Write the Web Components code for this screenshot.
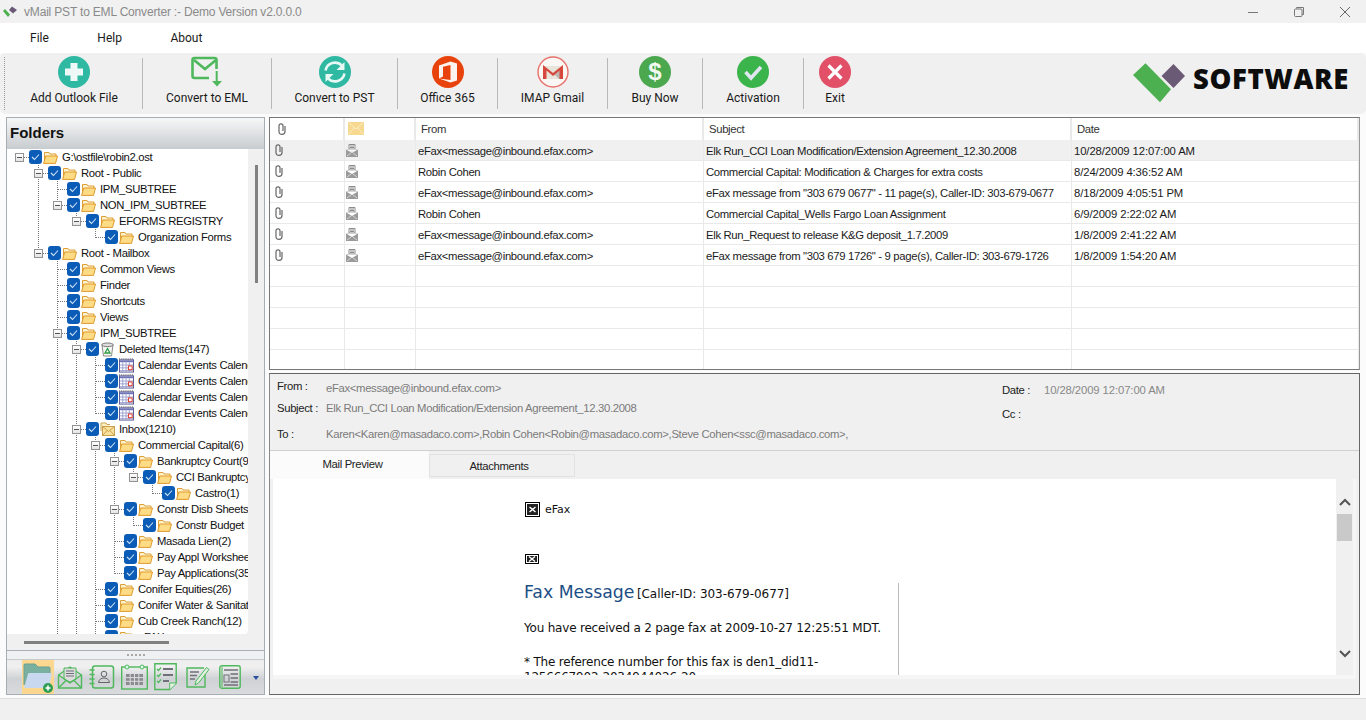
<!DOCTYPE html>
<html>
<head>
<meta charset="utf-8">
<title>vMail PST to EML Converter</title>
<style>
  html, body { margin: 0; height: 720px; overflow: hidden; background: #fbfbfb; }
  body { display: flex; flex-direction: column; font: 11.3px "Liberation Sans", Arial, sans-serif; }
</style>
</head>
<body>
<title-bar>vMail PST to EML Converter :- Demo Version v2.0.0.0</title-bar>
<menu-bar><menu-item>File</menu-item><menu-item>Help</menu-item><menu-item>About</menu-item></menu-bar>
<tool-bar>
  <tool-button icon="add" width="137">Add Outlook File</tool-button>
  <tool-button icon="eml" width="129">Convert to EML</tool-button>
  <tool-button icon="pst" width="126">Convert to PST</tool-button>
  <tool-button icon="office" width="100">Office 365</tool-button>
  <tool-button icon="gmail" width="110">IMAP Gmail</tool-button>
  <tool-button icon="buy" width="95">Buy Now</tool-button>
  <tool-button icon="active" width="101">Activation</tool-button>
  <tool-button icon="exit" width="62" last>Exit</tool-button>
</tool-bar>
<main-area>
  <folder-panel></folder-panel>
  <right-pane>
    <mail-list></mail-list>
    <mail-detail></mail-detail>
  </right-pane>
</main-area>
<status-bar></status-bar>

<script>
// icons used by the toolbar, lists and the folder tree
const ICONS = {
  add: `<svg viewBox="0 0 32 32" width="32" height="32"><circle cx="16" cy="16" r="16" fill="#2fb8a2"/><path d="M12.5 7h7v5.5H25v7h-5.5V25h-7v-5.5H7v-7h5.5z" fill="#eef8f6"/></svg>`,
  eml: `<svg viewBox="0 0 32 32" width="32" height="32"><path d="M18 22H3.5Q1.5 22 1.5 20V4Q1.5 2 3.5 2h20q2 0 2 2v9" fill="none" stroke="#4fb85c" stroke-width="2.6"/><path d="M3 4l11 9 11-9" fill="none" stroke="#4fb85c" stroke-width="2.6"/><path d="M25.7 15v11" stroke="#4fb85c" stroke-width="2"/><path d="M21 25h10l-5 5.5z" fill="#4fb85c"/></svg>`,
  pst: `<svg viewBox="0 0 32 32" width="32" height="32"><circle cx="16" cy="16" r="16" fill="#2fb8a2"/><path d="M6.5 14.5A9.8 9.8 0 0 1 23 9.5" fill="none" stroke="#e8f8f5" stroke-width="2.6"/><path d="M25.5 6v8h-8z" fill="#e8f8f5"/><path d="M25.5 17.5A9.8 9.8 0 0 1 9 22.5" fill="none" stroke="#e8f8f5" stroke-width="2.6"/><path d="M6.5 26v-8h8z" fill="#e8f8f5"/></svg>`,
  office: `<svg viewBox="0 0 32 32" width="32" height="32"><circle cx="16" cy="16" r="16" fill="#e8430c"/><path d="M7 9.5L18.500 5.5l6.5 2v17l-6.5 2L7 22.5l11.5 1.5V9L11 10.8v9.8L7 22.5z" fill="#fdf3ee"/></svg>`,
  gmail: `<svg viewBox="0 0 32 32" width="32" height="32"><circle cx="16" cy="16" r="15" fill="#fbf7f4" stroke="#e8716c" stroke-width="1.4"/><path d="M6 10h20v13H6z" fill="#e9e4da"/><path d="M16 17L26 10v13h-4z" fill="#bfb8b0"/><path d="M6 23V9l10 8 10-8v14h-3.5V14.5L16 20l-6.5-5.5V23z" fill="#d6483e"/></svg>`,
  buy: `<svg viewBox="0 0 32 32" width="32" height="32"><circle cx="16" cy="16" r="16" fill="#4ba84f"/><text x="16" y="24" text-anchor="middle" font-family="Liberation Sans" font-weight="700" font-size="24" fill="#f2faf2">$</text></svg>`,
  active: `<svg viewBox="0 0 32 32" width="32" height="32"><circle cx="16" cy="16" r="16" fill="#3bb44b"/><path d="M8.5 16l5.5 6 10-11" fill="none" stroke="#dfe6f2" stroke-width="3.6"/></svg>`,
  exit: `<svg viewBox="0 0 32 32" width="32" height="32"><circle cx="16" cy="16" r="16" fill="#e25068"/><path d="M9.5 9.5l13 13M22.5 9.5l-13 13" stroke="#fff" stroke-width="3.2"/></svg>`,
  folder: `<svg viewBox="0 0 15 13" width="15" height="13"><path d="M1.5 10.5V1.500h4.500l1 1.500h6v2" fill="#fdf2cc" stroke="#dd9f35"/><path d="M.6 12.400L2.800 5h11.700l-2 7.400z" fill="#fddc85" stroke="#e09a2c"/></svg>`,
  trash: `<svg viewBox="0 0 15 15" width="15" height="15"><path d="M2 3l1.5 11h8L13 3z" fill="#f5f5f3" stroke="#8a8a8a"/><ellipse cx="7.5" cy="2.8" rx="5.8" ry="1.8" fill="#dedede" stroke="#777"/><path d="M7.5 6.5l2.5 4.5H5z" fill="none" stroke="#2f9e44" stroke-width="1.3"/></svg>`,
  calendar: `<svg viewBox="0 0 16 15" width="16" height="15"><rect x=".5" y="1.500" width="15" height="13" fill="#fff" stroke="#55558f"/><path d="M0 .5h16" stroke="#444" stroke-dasharray="1 1"/><path d="M1 3h14" stroke="#6f73b8" stroke-width="2"/><path d="M1 7h14M1 10h14M1 13h14M4 4v10M7.500 4v10M11 4v10" stroke="#9a9ed0"/><rect x="10" y="8" width="4" height="4" fill="#fff" stroke="#e03020"/></svg>`,
  inbox: `<svg viewBox="0 0 15 15" width="15" height="15"><path d="M1 9V1h5l1 1.5h3" fill="#fbeec0" stroke="#c9a55a"/><rect x="2.5" y="4.5" width="12" height="9" fill="#fbe29a" stroke="#c9a050"/><path d="M2.5 4.5l6 5 6-5M2.5 13.500l4.500-5M14.500 13.500l-4.500-5" fill="none" stroke="#c9a050"/></svg>`,
  clip: `<svg viewBox="0 0 8 12" width="8" height="12"><path d="M7 3v5.500Q7 11.300 4 11.300T1 8.500V2.800Q1 .8 3 .8t2 2V8" fill="none" stroke="#666" stroke-width="1.2"/></svg>`,
  env: `<svg viewBox="0 0 16 13" width="16" height="13"><rect width="16" height="13" fill="#f6d88e"/><path d="M1 1l7 6 7-6M1 12l5-6M15 12l-5-6" fill="none" stroke="#fbeecb"/></svg>`,
  fax: `<svg viewBox="0 0 12 13" width="12" height="13"><path d="M3 .5h6V5H3z" fill="#fff" stroke="#8b8b8b"/><path d="M0 5.5l6 3.5 6-3.500V13H0z" fill="#9a9a9a"/><path d="M4 2h4M4 3.500h4" stroke="#8b8b8b"/><path d="M0 5.5h12M1 12l4-3M11 12l-4-3" stroke="#d5d5d5" fill="none"/></svg>`,
  nFolder: `<svg viewBox="0 0 32 32" width="32" height="32"><path d="M2 24V4q0-1 1-1h10l3 3h11q1 0 1 1v6" fill="#79b0a0" stroke="#6a9f90"/><path d="M2 27l4-14q.5-1 1.5-1H30l-3 15z" fill="#c8d8ee"/><circle cx="26" cy="27" r="5" fill="#2f9f55"/><path d="M26 24.500v5M23.500 27h5" stroke="#fff" stroke-width="1.6"/></svg>`,
  nMail: `<svg viewBox="0 0 26 26" width="26" height="26"><path d="M1.5 11L13 3l11.5 8v13h-23z" fill="none" stroke="#4fb85c" stroke-width="1.4"/><path d="M7 4h12v11l-6 3-6-3z" fill="#ddd" stroke="#4fb85c"/><path d="M9 7h8M9 9.500h8M9 12h8" stroke="#6c6c7a"/><path d="M1.5 11L13 19l11.500-8M1.500 24l8-8M24.500 24l-8-8" fill="none" stroke="#4fb85c" stroke-width="1.4"/></svg>`,
  nBook: `<svg viewBox="0 0 26 26" width="26" height="26"><rect x="3.5" y="2" width="21" height="22" rx="2.5" fill="none" stroke="#4fb85c" stroke-width="1.5"/><path d="M.5 6h5M.5 10.500h5M.5 15h5M.5 19.500h5" stroke="#4fb85c" stroke-width="1.6"/><circle cx="15" cy="10" r="2.8" fill="none" stroke="#666"/><path d="M9.5 18.500q1-4.500 5.500-4.500t5.500 4.500z" fill="none" stroke="#666"/></svg>`,
  nCal: `<svg viewBox="0 0 27 26" width="27" height="26"><rect x=".7" y="3" width="25.6" height="22" fill="none" stroke="#4fb85c" stroke-width="1.4"/><circle cx="6" cy="3" r="2" fill="#dfe" stroke="#4fb85c"/><circle cx="21" cy="3" r="2" fill="#dfe" stroke="#4fb85c"/><path d="M5 10h17v11H5z" fill="#8a8a90"/><path d="M5 13.600h17M5 17.300h17M9.200 10v11M13.500 10v11M17.800 10v11" stroke="#dedede"/></svg>`,
  nTask: `<svg viewBox="0 0 24 28" width="24" height="28"><path d="M.8.8h21.4V20l-6.5 6.5H.8z" fill="none" stroke="#4fb85c" stroke-width="1.4"/><path d="M15.700 26.500V20h6.500" fill="#e8f2e8" stroke="#4fb85c"/><path d="M3 6l1.5 1.5L7 4.500M3 12l1.500 1.500L7 10.500M3 18l1.500 1.500L7 16.500" fill="none" stroke="#4fb85c" stroke-width="1.2"/><path d="M9 6h10M9 12h10M9 18h6" stroke="#707078" stroke-width="1.8"/></svg>`,
  nNote: `<svg viewBox="0 0 24 24" width="24" height="24"><path d="M19 9v13H1V3h17" fill="none" stroke="#4fb85c" stroke-width="1.4"/><path d="M4 7h9M4 10.500h7M4 14h5" stroke="#707078" stroke-width="1.5"/><path d="M9 20l1-4L20.500 2.500l2.500 2L12.500 18z" fill="#dff0df" stroke="#4fb85c"/></svg>`,
  nJournal: `<svg viewBox="0 0 22 24" width="22" height="24"><rect x=".8" y=".8" width="20.4" height="22.4" rx="2" fill="none" stroke="#4fb85c" stroke-width="1.4"/><path d="M3 2v20" stroke="#4fb85c"/><path d="M5 5h14M11.500 9h7.500M11.500 13h7.500M11.500 17h7.500M5 20h14" stroke="#707078" stroke-width="1.3"/><rect x="5" y="10" width="5" height="7" fill="none" stroke="#707078"/></svg>`
};

class TitleBar extends HTMLElement {
  constructor() {
    super();
    this.attachShadow({ mode: 'open' }).innerHTML = `
      <style>
        :host { display: flex; align-items: center; height: 23px; flex: none; background: #f1f1f1; color: #8a8a8a; font: 12px "Liberation Sans", sans-serif; letter-spacing: -.18px; }
        .logo { margin: 0 7px 0 3px; display: flex; }
        .title { flex: 1; }
        .ctl { width: 46px; display: flex; justify-content: center; }
        .ctls { display: flex; margin-right: -2px; }
      </style>
      <span class="logo"><svg width="14" height="11" viewBox="0 0 14 11"><path d="M0 5l2-2 5 5.500L5 11z" fill="#4cb050"/><path d="M6 4l3-3.500L14 4l-4 3.500z" fill="#6b5a75"/></svg></span>
      <span class="title"><slot></slot></span>
      <span class="ctls">
        <span class="ctl"><svg width="12" height="12"><path d="M1 6.500h10" stroke="#777"/></svg></span>
        <span class="ctl"><svg width="12" height="12"><path d="M3.500 2.500V1.500h7v7h-1.500" fill="none" stroke="#777"/><rect x="1.500" y="3" width="7.500" height="7.500" rx="1" fill="none" stroke="#777"/></svg></span>
        <span class="ctl"><svg width="12" height="12"><path d="M1 1l10 10M11 1L1 11" stroke="#666"/></svg></span>
      </span>`;
  }
}

class MenuBar extends HTMLElement {
  constructor() {
    super();
    this.attachShadow({ mode: 'open' }).innerHTML = `
      <style>
        :host { display: flex; align-items: center; height: 30px; flex: none; background: #fff; padding-left: 30px; gap: 48.5px; color: #1a1a1a; }
      </style>
      <slot></slot>`;
  }
}

class MenuItem extends HTMLElement {
  constructor() {
    super();
    this.attachShadow({ mode: 'open' }).innerHTML = `
      <style>:host { display: block; font: 12px Roboto, sans-serif; }</style><slot></slot>`;
  }
}

class ToolBar extends HTMLElement {
  constructor() {
    super();
    this.attachShadow({ mode: 'open' }).innerHTML = `
      <style>
        :host { display: flex; align-items: stretch; height: 61px; flex: none; background: #f0f0f0; border-radius: 5px; }
        .grip { width: 1px; margin: 4px 0 4px 4px; border-left: 1px dotted #999; }
        .logo { margin-left: auto; margin-right: 17px; display: flex; align-items: center; gap: 7px; }
        .logo svg { margin-top: -2px; }
        .word { font: 800 27.5px "Open Sans", sans-serif; letter-spacing: .6px; color: #0d0d0d; margin-top: -10px; }
      </style>
      <span class="grip"></span>
      <slot></slot>
      <span class="logo">
        <svg width="53" height="40" viewBox="0 0 53 40"><path d="M0 12L12.500.3 38 26.300 27 39.300z" fill="#4cb050"/><path d="M28.500 13L40.500 1 52 13 40.500 25z" fill="#6b5a75"/></svg>
        <span class="word">SOFTWARE</span>
      </span>`;
  }
}

class ToolButton extends HTMLElement {
  constructor() {
    super();
    const w = this.getAttribute('width');
    const sep = this.hasAttribute('last') ? 'none' : '1px solid #b8b8b8';
    this.attachShadow({ mode: 'open' }).innerHTML = `
      <style>
        :host { display: flex; flex-direction: column; align-items: center; width: ${w}px; flex: none; font: 12px Roboto, sans-serif; color: #1a1a1a; }
        .ico { height: 32px; margin-top: -2px; display: flex; }
        .lab { margin-top: 2px; line-height: 17px; white-space: nowrap; }
        .box { display: flex; flex-direction: column; align-items: center; flex: 1; align-self: stretch; margin: 5px 0; border-right: ${sep}; }
      </style>
      <div class="box">
        <span class="ico">${ICONS[this.getAttribute('icon')]}</span>
        <span class="lab"><slot></slot></span>
      </div>`;
  }
}

class MainArea extends HTMLElement {
  constructor() {
    super();
    this.attachShadow({ mode: 'open' }).innerHTML = `
      <style>:host { display: flex; flex: 1; min-height: 0; padding: 3px 6px 3px 6px; gap: 4px; }</style><slot></slot>`;
  }
}

// rows of the folder tree: [level, label, icon]
const FOLDERS = [
  [0, 'G:\\ostfile\\robin2.ost'], [1, 'Root - Public'], [2, 'IPM_SUBTREE'], [2, 'NON_IPM_SUBTREE'],
  [3, 'EFORMS REGISTRY'], [4, 'Organization Forms'], [1, 'Root - Mailbox'], [2, 'Common Views'],
  [2, 'Finder'], [2, 'Shortcuts'], [2, 'Views'], [2, 'IPM_SUBTREE'], [3, 'Deleted Items(147)', 'trash'],
  [4, 'Calendar Events Calendar', 'calendar'], [4, 'Calendar Events Calendar', 'calendar'],
  [4, 'Calendar Events Calendar', 'calendar'], [4, 'Calendar Events Calendar', 'calendar'],
  [3, 'Inbox(1210)', 'inbox'], [4, 'Commercial Capital(6)'], [5, 'Bankruptcy Court(9)'], [6, 'CCI Bankruptcy'],
  [7, 'Castro(1)'], [5, 'Constr Disb Sheets'], [6, 'Constr Budget'], [5, 'Masada Lien(2)'],
  [5, 'Pay Appl Worksheets'], [5, 'Pay Applications(35)'], [4, 'Conifer Equities(26)'],
  [4, 'Conifer Water & Sanitation'], [4, 'Cub Creek Ranch(12)'], [4, 'eFAX']
];

class TreeRow extends HTMLElement {
  // cells: one flag per level, own cell last. kind is pipe, tee, end or blank
  setup(cells, hasKids, icon) {
    const html = cells.map((k, i) => {
      const own = i === cells.length - 1;
      return `<span class="cell ${k}">${own && hasKids ? '<i class="exp"></i>' : ''}</span>`;
    }).join('');
    this.attachShadow({ mode: 'open' }).innerHTML = `
      <style>
        :host { display: flex; align-items: stretch; height: 16px; white-space: nowrap; color: #111; }
        .cell { width: 19px; flex: none; display: flex; align-items: center; justify-content: center; background-repeat: no-repeat; }
        .pipe, .tee { background-image: repeating-linear-gradient(#777 0 1px, transparent 1px 2px); background-size: 1px 100%; background-position: 9px 0; }
        .end { background-image: repeating-linear-gradient(#777 0 1px, transparent 1px 2px); background-size: 1px 8px; background-position: 9px 0; }
        .tee, .end, .root { position: relative; }
        .tee::after, .end::after, .root::after { content: ""; position: absolute; left: 9px; right: 0; top: 8px; border-top: 1px dotted #777; }
        .exp { width: 9px; height: 9px; box-sizing: border-box; border: 1px solid #939393; background: linear-gradient(#fff, #e4e4e4); position: relative; z-index: 1; display: flex; align-items: center; justify-content: center; }
        .exp::before { content: ""; width: 5px; border-top: 1px solid #555; }
        .chk { width: 13px; height: 14px; margin-top: 1px; border-radius: 3px; background: #0b5cb6; flex: none; display: flex; align-items: center; justify-content: center; }
        .ico { display: flex; align-items: center; width: 15px; margin: 0 0 0 1px; flex: none; }
        .txt { margin-left: 4.5px; line-height: 16px; letter-spacing: -.33px; }
      </style>
      ${html}
      <span class="chk"><svg width="9" height="8" viewBox="0 0 9 8"><path d="M1 4l2.500 2.500L8 1.500" fill="none" stroke="#cfe2f7" stroke-width="1.1"/></svg></span>
      <span class="ico">${ICONS[icon || 'folder']}</span>
      <span class="txt"><slot></slot></span>`;
  }
}

class FolderPanel extends HTMLElement {
  constructor() {
    super();
    const bar = ['nMail', 'nBook', 'nCal', 'nTask', 'nNote', 'nJournal'];
    this.attachShadow({ mode: 'open' }).innerHTML = `
      <style>
        :host { display: flex; flex-direction: column; width: 259px; box-sizing: border-box; flex: none; border: 1px solid #a6adb3; background: #f0f0f0; }
        .head { height: 31px; flex: none; padding: 0 0 2px 3px; box-sizing: border-box; background: linear-gradient(#f7f7f7, #c7ccd0); font: 700 15px "Liberation Sans", sans-serif; color: #111; display: flex; align-items: center; }
        .body { height: 485px; flex: none; display: flex; }
        .tree { width: 241px; flex: none; background: #fff; overflow: hidden; border-radius: 0 0 4px 0; padding-left: 2.5px; box-sizing: border-box; }
        .vs { flex: 1; display: flex; justify-content: center; padding-top: 16px; }
        .vs i { width: 3px; height: 118px; background: #808080; margin-left: 1px; }
        .hs { height: 16px; flex: none; display: flex; align-items: center; padding-left: 17px; border-bottom: 1px solid #a6adb3; }
        .hs i { width: 145px; height: 3px; background: #808080; }
        .split { height: 8px; flex: none; display: flex; justify-content: center; align-items: center; gap: 2px; background: #eef0f2; border-bottom: 1px solid #c6cacd; }
        .split i { width: 2px; height: 2px; background: #a8a8a8; }
        .bar { flex: 1; display: flex; align-items: center; padding-left: 15px; background: linear-gradient(#ededed, #f0f0f0 20%, #cfd2d5 55%, #d9dbdd); }
        .sel { width: 32px; align-self: stretch; background: #fbd78f; display: flex; align-items: center; justify-content: center; }
        .b { width: 32px; display: flex; justify-content: center; align-items: center; flex: none; }
        .more { margin-left: 7px; width: 0; height: 0; border: 3.5px solid transparent; border-top: 4px solid #2b4fa0; margin-top: 4px; }
      </style>
      <div class="head">Folders</div>
      <div class="body"><div class="tree"></div><div class="vs"><i></i></div></div>
      <div class="hs"><i></i></div>
      <div class="split"><i></i><i></i><i></i><i></i><i></i></div>
      <div class="bar">
        <span class="sel">${ICONS.nFolder}</span>
        ${bar.map(n => `<span class="b">${ICONS[n]}</span>`).join('')}
        <span class="more"></span>
      </div>`;
    this.buildTree(this.shadowRoot.querySelector('.tree'));
  }

  buildTree(tree) {
    const n = FOLDERS.length;
    // the list goes on below the visible part, so those branches stay open at the end
    const continues = (i, lvl) => {
      for (let j = i + 1; j < n; j++) {
        if (FOLDERS[j][0] < lvl) return false;
        if (FOLDERS[j][0] === lvl) return true;
      }
      return lvl >= 2 && lvl <= 4;
    };
    const open = [];
    FOLDERS.forEach(([lvl, label, icon], i) => {
      open.length = lvl;
      const cells = open.map(o => (o ? 'pipe' : 'blank'));
      const more = continues(i, lvl);
      cells.push(lvl === 0 ? 'root' : more ? 'tee' : 'end');
      open[lvl] = more;
      const hasKids = i + 1 < n && FOLDERS[i + 1][0] > lvl;
      const row = document.createElement('tree-row');
      row.textContent = label;
      row.setup(cells, hasKids, icon);
      tree.appendChild(row);
    });
  }
}

class RightPane extends HTMLElement {
  constructor() {
    super();
    this.attachShadow({ mode: 'open' }).innerHTML = `
      <style>:host { display: flex; flex-direction: column; flex: 1; min-width: 0; gap: 3px; }</style><slot></slot>`;
  }
}

const MAILS = [
  ['eFax<message@inbound.efax.com>', 'Elk Run_CCI Loan Modification/Extension Agreement_12.30.2008', '10/28/2009 12:07:00 AM'],
  ['Robin Cohen', 'Commercial Capital: Modification & Charges for extra costs', '8/24/2009 4:36:52 AM'],
  ['eFax<message@inbound.efax.com>', 'eFax message from "303 679 0677" - 11 page(s), Caller-ID: 303-679-0677', '8/18/2009 4:05:51 PM'],
  ['Robin Cohen', 'Commercial Capital_Wells Fargo Loan Assignment', '6/9/2009 2:22:02 AM'],
  ['eFax<message@inbound.efax.com>', 'Elk Run_Request to release K&G deposit_1.7.2009', '1/8/2009 2:41:22 AM'],
  ['eFax<message@inbound.efax.com>', 'eFax message from "303 679 1726" - 9 page(s), Caller-ID: 303-679-1726', '1/8/2009 1:54:20 AM']
];

class MailList extends HTMLElement {
  constructor() {
    super();
    const esc = s => s.replace(/&/g, '&amp;').replace(/</g, '&lt;');
    const rows = MAILS.map((m, i) => `
      <div class="row ${i === 0 ? 'sel' : ''}">
        <span class="c i1">${ICONS.clip}</span><span class="c i2">${ICONS.fax}</span>
        <span class="c t">${esc(m[0])}</span><span class="c t">${esc(m[1])}</span><span class="c t d">${m[2]}</span>
      </div>`).join('');
    const empty = '<div class="row"><span class="c"></span><span class="c"></span><span class="c"></span><span class="c"></span><span class="c"></span></div>'.repeat(5);
    this.attachShadow({ mode: 'open' }).innerHTML = `
      <style>
        :host { display: block; height: 253px; flex: none; box-sizing: border-box; border: 1px solid #777; border-right-color: #999; background: #fff; overflow: hidden; color: #1b1b1b; letter-spacing: -.33px; }
        .row { display: grid; grid-template-columns: 75px 71px 288px 368px 1fr; height: 21px; box-sizing: border-box; border-bottom: 1px solid #e9e9e9; align-items: stretch; }
        .head { height: 22px; border-bottom: 0; }
        .c { border-right: 1px solid #e9e9e9; display: flex; align-items: center; white-space: nowrap; overflow: hidden; padding-left: 2px; }
        .t { padding-top: 1px; }
        .d { letter-spacing: -.1px; }
        .i1 { padding-left: 5px; }
        .i2 { padding-left: 1px; }
        .head .c { padding-left: 5px; padding-bottom: 1px; color: #333; border-right: 2px solid #e9e9e9; }
        .head .i1 { padding-left: 8px; }
        .head .i2 { padding-left: 3px; }
        .sel { background: #f0f0f0; }
      </style>
      <div class="row head">
        <span class="c i1">${ICONS.clip}</span><span class="c i2">${ICONS.env}</span>
        <span class="c">From</span><span class="c">Subject</span><span class="c">Date</span>
      </div>
      ${rows}${empty}`;
  }
}

class MailDetail extends HTMLElement {
  constructor() {
    super();
    this.attachShadow({ mode: 'open' }).innerHTML = `
      <style>
        :host { display: flex; flex-direction: column; flex: 1; min-height: 0; box-sizing: border-box; border: 1px solid #666; border-left-color: #888; background: #f0f0f0; letter-spacing: -.33px; }
        .info { height: 77px; flex: none; display: flex; box-sizing: border-box; color: #222; border-bottom: 1px solid #d0d0d0; }
        .left { width: 732px; padding: 1px 0 0 7px; box-sizing: border-box; display: grid; grid-template-columns: 49px 1fr; grid-template-rows: 22px 22px 30px; align-items: center; }
        .right { display: grid; grid-template-columns: 42px 1fr; grid-template-rows: 24px 24px; padding-top: 4px; align-items: center; }
        .v { color: #7b7b7b; }
        .first { margin-top: 3px; }
        .right .v { letter-spacing: -.1px; color: #888; }
        .tabs { height: 28px; flex: none; display: flex; align-items: flex-start; }
        .tab { box-sizing: border-box; display: flex; align-items: center; justify-content: center; color: #222; }
        .on { width: 159px; height: 28px; background: #fbfbfb; padding: 0 0 3px 6px; }
        .off { width: 146px; height: 23px; margin-top: 3px; background: #f0f0f0; border: 1px solid #e2e2e2; padding-right: 6px; }
        .wrap { margin: 0 3px 15px 3px; flex: 1; min-height: 0; display: flex; padding: 0 3px 4px 0; background: #f6f6f6; }
      </style>
      <div class="info">
        <div class="left">
          <span>From :</span><span class="v first">eFax&lt;message@inbound.efax.com&gt;</span>
          <span>Subject :</span><span class="v">Elk Run_CCI Loan Modification/Extension Agreement_12.30.2008</span>
          <span>To :</span><span class="v">Karen&lt;Karen@masadaco.com&gt;,Robin Cohen&lt;Robin@masadaco.com&gt;,Steve Cohen&lt;ssc@masadaco.com&gt;,</span>
        </div>
        <div class="right">
          <span>Date :</span><span class="v">10/28/2009 12:07:00 AM</span>
          <span>Cc :</span><span></span>
        </div>
      </div>
      <div class="tabs"><span class="tab on">Mail Preview</span><span class="tab off">Attachments</span></div>
      <div class="wrap"><mail-preview></mail-preview></div>`;
  }
}

class MailPreview extends HTMLElement {
  constructor() {
    super();
    const broken = (w, h) => `<svg width="${w}" height="${h}" viewBox="0 0 ${w} ${h}"><rect x=".5" y=".5" width="${w - 1}" height="${h - 1}" fill="#fff" stroke="#000"/><rect x="2" y="2" width="${w - 4}" height="${h - 4}" fill="#222"/><path d="M${w / 2 - 3} ${h / 2 - 2.5}l6 5M${w / 2 + 3} ${h / 2 - 2.5}l-6 5" stroke="#fff" stroke-width="1.4"/></svg>`;
    this.attachShadow({ mode: 'open' }).innerHTML = `
      <style>
        :host { display: flex; flex: 1; min-width: 0; background: #fff; font: 12px "DejaVu Sans", Verdana, sans-serif; color: #111; letter-spacing: 0; }
        .page { flex: 1; overflow: hidden; padding: 22px 0 0 251px; box-sizing: border-box; }
        .brand { display: flex; align-items: center; gap: 5px; height: 16px; padding-left: 1px; font-size: 11px; }
        .i2 { margin: 37px 0 0 1px; height: 9px; display: flex; }
        .tbl { margin-top: 20px; width: 374px; border-right: 1px solid #bbb; height: 95px; overflow: hidden; }
        .h { color: #1d4f86; font-size: 17.3px; line-height: 18px; }
        .h small { font-size: 12px; color: #111; margin-left: -3px; letter-spacing: -.05px; }
        p { margin: 0; line-height: 15px; letter-spacing: -.2px; }
        .a { margin-top: 18px; }
        .b { margin-top: 19px; }
        .sb { width: 17px; flex: none; background: #f0f0f0; display: flex; flex-direction: column; align-items: center; }
        .up { margin-top: 19px; height: 8px; display: flex; }
        .th { margin-top: 8px; width: 15px; height: 27px; background: #c9c9c9; }
        .dn { margin-top: auto; margin-bottom: 17px; height: 8px; display: flex; }
      </style>
      <div class="page">
        <div class="brand">${broken(15, 15)}<span>eFax</span></div>
        <div class="i2">${broken(14, 10)}</div>
        <div class="tbl">
          <div class="h">Fax Message <small>[Caller-ID: 303-679-0677]</small></div>
          <p class="a">You have received a 2 page fax at 2009-10-27 12:25:51 MDT.</p>
          <p class="b">* The reference number for this fax is den1_did11-<br>1256667902-2034944026-20.</p>
        </div>
      </div>
      <div class="sb">
        <span class="up"><svg width="12" height="8"><path d="M1 7l5-5 5 5" fill="none" stroke="#555" stroke-width="2"/></svg></span>
        <span class="th"></span>
        <span class="dn"><svg width="12" height="8"><path d="M1 1l5 5 5-5" fill="none" stroke="#555" stroke-width="2"/></svg></span>
      </div>`;
  }
}

class StatusBar extends HTMLElement {
  constructor() {
    super();
    this.attachShadow({ mode: 'open' }).innerHTML = `
      <style>:host { display: block; height: 22px; flex: none; background: #f0f0f0; border-top: 1px solid #dedede; box-sizing: border-box; }</style>`;
  }
}

customElements.define('title-bar', TitleBar);
customElements.define('menu-bar', MenuBar);
customElements.define('menu-item', MenuItem);
customElements.define('tool-bar', ToolBar);
customElements.define('tool-button', ToolButton);
customElements.define('main-area', MainArea);
customElements.define('tree-row', TreeRow);
customElements.define('folder-panel', FolderPanel);
customElements.define('right-pane', RightPane);
customElements.define('mail-list', MailList);
customElements.define('mail-preview', MailPreview);
customElements.define('mail-detail', MailDetail);
customElements.define('status-bar', StatusBar);
</script>
</body>
</html>
